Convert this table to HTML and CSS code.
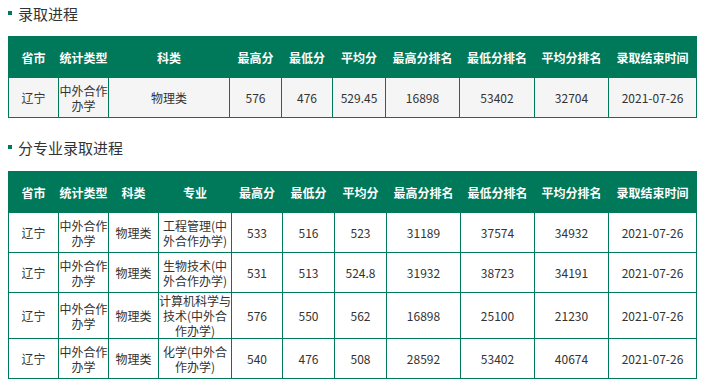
FILE: index.html
```html
<!DOCTYPE html>
<html lang="zh-CN">
<head>
<meta charset="utf-8">
<title>录取进程</title>
<link rel="stylesheet" href="styles.css">
</head>
<body>
<div class="section-title first"><span class="dot"></span><span>录取进程</span></div>
<table class="data gray">
  <colgroup>
    <col style="width:50px"><col style="width:50px"><col style="width:121px"><col style="width:52px"><col style="width:51px"><col style="width:53px"><col style="width:74px"><col style="width:75px"><col style="width:74px"><col style="width:88px">
  </colgroup>
  <thead>
    <tr><th>省市</th><th>统计类型</th><th>科类</th><th>最高分</th><th>最低分</th><th>平均分</th><th>最高分排名</th><th>最低分排名</th><th>平均分排名</th><th>录取结束时间</th></tr>
  </thead>
  <tbody>
    <tr><td>辽宁</td><td>中外合作办学</td><td>物理类</td><td>576</td><td>476</td><td>529.45</td><td>16898</td><td>53402</td><td>32704</td><td>2021-07-26</td></tr>
  </tbody>
</table>

<div class="section-title second"><span class="dot"></span><span>分专业录取进程</span></div>
<table class="data">
  <colgroup>
    <col style="width:50px"><col style="width:50px"><col style="width:50px"><col style="width:73px"><col style="width:51px"><col style="width:52px"><col style="width:52px"><col style="width:74px"><col style="width:74px"><col style="width:74px"><col style="width:88px">
  </colgroup>
  <thead>
    <tr><th>省市</th><th>统计类型</th><th>科类</th><th>专业</th><th>最高分</th><th>最低分</th><th>平均分</th><th>最高分排名</th><th>最低分排名</th><th>平均分排名</th><th>录取结束时间</th></tr>
  </thead>
  <tbody>
    <tr><td>辽宁</td><td>中外合作办学</td><td>物理类</td><td>工程管理(中外合作办学)</td><td>533</td><td>516</td><td>523</td><td>31189</td><td>37574</td><td>34932</td><td>2021-07-26</td></tr>
    <tr><td>辽宁</td><td>中外合作办学</td><td>物理类</td><td>生物技术(中外合作办学)</td><td>531</td><td>513</td><td>524.8</td><td>31932</td><td>38723</td><td>34191</td><td>2021-07-26</td></tr>
    <tr><td>辽宁</td><td>中外合作办学</td><td>物理类</td><td>计算机科学与技术(中外合作办学)</td><td>576</td><td>550</td><td>562</td><td>16898</td><td>25100</td><td>21230</td><td>2021-07-26</td></tr>
    <tr><td>辽宁</td><td>中外合作办学</td><td>物理类</td><td>化学(中外合作办学)</td><td>540</td><td>476</td><td>508</td><td>28592</td><td>53402</td><td>40674</td><td>2021-07-26</td></tr>
  </tbody>
</table>
</body>
</html>
```

FILE: styles.css
```css
html, body {
  margin: 0;
  padding: 0;
  background: #ffffff;
}
body {
  padding: 0 8px;
  font-family: "Noto Sans CJK SC", "Microsoft YaHei", sans-serif;
  color: #333333;
}
.section-title {
  display: flex;
  align-items: center;
  gap: 6px;
  height: 26px;
  font-size: 15px;
  color: #333333;
}
.section-title.first {
  margin-bottom: 10px;
}
.section-title.second {
  margin-top: 16px;
  margin-bottom: 11px;
}
.dot {
  display: block;
  width: 4px;
  height: 4px;
  background: #00785a;
}
table.data {
  width: 688px;
  table-layout: fixed;
  border-collapse: collapse;
  border: 1px solid #00785a;
}
table.data th {
  background: #00785a;
  color: #ffffff;
  font-weight: bold;
  font-size: 12px;
  line-height: 15px;
  height: 40px;
  padding: 0;
  text-align: center;
  vertical-align: middle;
  border: 1px solid #00785a;
  border-left: 1px solid #ffffff;
}
table.data th:first-child {
  border-left: 1px solid #00785a;
}
table.data td {
  font-size: 12px;
  line-height: 15px;
  height: 39px;
  padding: 0;
  text-align: center;
  vertical-align: middle;
  border: 1px solid #00785a;
  color: #333333;
  background: #ffffff;
}
table.data.gray td {
  background: #f5f5f5;
}
```
